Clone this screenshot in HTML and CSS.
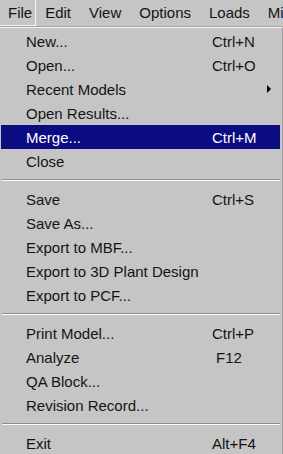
FILE: index.html
```html
<!DOCTYPE html>
<html lang="en">
<head>
    <meta charset="UTF-8">
    <meta name="viewport" content="width=device-width, initial-scale=1.0">
    <title>File Menu</title>
    <link rel="stylesheet" href="styles.css">
</head>
<body>
    <div class="menubar">
        <span class="bar-item open">File</span>
        <span class="bar-item">Edit</span>
        <span class="bar-item">View</span>
        <span class="bar-item">Options</span>
        <span class="bar-item">Loads</span>
        <span class="bar-item">Mi</span>
    </div>

    <div class="menu">
        <div class="item"><span class="label">New...</span><span class="key">Ctrl+N</span></div>
        <div class="item"><span class="label">Open...</span><span class="key">Ctrl+O</span></div>
        <div class="item"><span class="label">Recent Models</span><span class="arrow"></span></div>
        <div class="item"><span class="label">Open Results...</span></div>
        <div class="item selected"><span class="label">Merge...</span><span class="key">Ctrl+M</span></div>
        <div class="item"><span class="label">Close</span></div>
        <div class="separator"></div>
        <div class="item"><span class="label">Save</span><span class="key">Ctrl+S</span></div>
        <div class="item"><span class="label">Save As...</span></div>
        <div class="item"><span class="label">Export to MBF...</span></div>
        <div class="item"><span class="label">Export to 3D Plant Design</span></div>
        <div class="item"><span class="label">Export to PCF...</span></div>
        <div class="separator"></div>
        <div class="item"><span class="label">Print Model...</span><span class="key">Ctrl+P</span></div>
        <div class="item"><span class="label">Analyze</span><span class="key fkey">F12</span></div>
        <div class="item"><span class="label">QA Block...</span></div>
        <div class="item"><span class="label">Revision Record...</span></div>
        <div class="separator"></div>
        <div class="item"><span class="label">Exit</span><span class="key">Alt+F4</span></div>
    </div>
</body>
</html>
```

FILE: styles.css
```css
* {
    margin: 0;
    padding: 0;
    box-sizing: border-box;
}

body {
    background: #c5c5c5;
    font-family: 'Liberation Sans', Arial, sans-serif;
    font-size: 15px;
    color: #141414;
    width: 283px;
    height: 454px;
    overflow: hidden;
}

.menubar {
    display: flex;
    height: 27px;
    border-bottom: 1px solid #a4a4a4;
    white-space: nowrap;
}

.bar-item {
    height: 26px;
    line-height: 26px;
    padding: 0 9px;
}

.bar-item.open {
    padding: 0 3px 0 8px;
    border-right: 1px solid #f4f4f4;
    border-bottom: 1px solid #f4f4f4;
}

.menu {
    border-top: 1px solid #f4f4f4;
    border-right: 1px solid #9c9c9c;
    padding-top: 1px;
    padding-right: 1px;
    height: 427px;
}

.item {
    display: flex;
    align-items: center;
    height: 24px;
    margin: 0 1px 0 1px;
    padding-left: 25px;
    white-space: nowrap;
}

.item .label {
    width: 186px;
}

.item.selected {
    background: #0b0b82;
    color: #ffffff;
}

.fkey {
    padding-left: 4px;
}

.arrow {
    margin-left: auto;
    margin-right: 9px;
    width: 0;
    height: 0;
    border-left: 4px solid #000;
    border-top: 4px solid transparent;
    border-bottom: 4px solid transparent;
}

.separator {
    margin: 6px 1px 6px 2px;
    border-top: 1px solid #8c8c8c;
    border-bottom: 1px solid #fafafa;
}
```
